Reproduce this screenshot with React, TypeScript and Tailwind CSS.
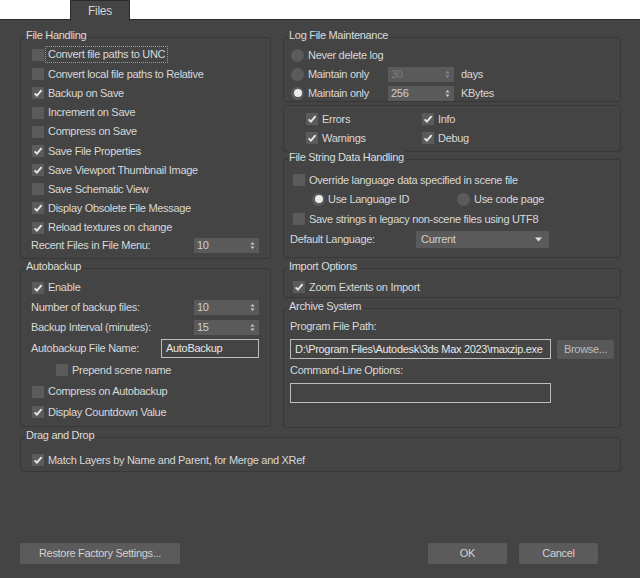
import React from 'react';

const Check: React.FC<{ on?: boolean }> = ({ on }) => (
  <span className="flex h-[12px] w-[12px] shrink-0 items-center justify-center bg-[#5b5b5b]">
    {on && (
      <svg width="12" height="12" viewBox="0 0 12 12">
        <path d="M2.6 6.4 L4.9 8.6 L9.6 3.2" stroke="#e4e4e4" strokeWidth="2" fill="none" />
      </svg>
    )}
  </span>
);

const Radio: React.FC<{ on?: boolean }> = ({ on }) => (
  <span className="flex h-[13px] w-[13px] shrink-0 items-center justify-center rounded-full bg-[#5b5b5b]">
    {on && <span className="h-[8px] w-[8px] rounded-full bg-[#ececec]" />}
  </span>
);

const CheckRow: React.FC<{ label: string; on?: boolean; className?: string; focus?: boolean }> = ({
  label,
  on,
  className = 'h-[19.2px]',
  focus,
}) => (
  <div className={`flex items-center ${className}`}>
    <Check on={on} />
    {focus ? (
      <span className="ml-[2px] px-[2px] leading-[15px] outline-1 outline-dotted outline-[#9a9a9a]">{label}</span>
    ) : (
      <span className="ml-[4px]">{label}</span>
    )}
  </div>
);

const Spinner: React.FC<{ value: string; w: string; disabled?: boolean }> = ({ value, w, disabled }) => (
  <div className={`flex h-[15px] items-center justify-between bg-[#5a5a5a] pl-[3px] pr-[4px] ${w}`}>
    <span className={disabled ? 'text-[#7c7c7c]' : 'text-[#cfcfcf]'}>{value}</span>
    <svg width="5" height="9" viewBox="0 0 5 9">
      <path d="M0.5 3.6 L2.5 1 L4.5 3.6Z M0.5 5.4 L2.5 8 L4.5 5.4Z" fill={disabled ? '#8a8a8a' : '#cdcdcd'} />
    </svg>
  </div>
);

const Group: React.FC<{ title?: string; className: string; children: React.ReactNode }> = ({
  title,
  className,
  children,
}) => (
  <div className={`relative shrink-0 rounded-[3px] border border-[#383838] ${className}`}>
    {title && (
      <span className="absolute -top-[9px] left-[4px] bg-[#444444] px-[1px] leading-[13px] text-[#dcdcdc]">
        {title}
      </span>
    )}
    {children}
  </div>
);

const Button: React.FC<{ label: string; w: string }> = ({ label, w }) => (
  <div className={`flex h-[21px] items-center justify-center rounded-[2px] bg-[#5b5b5b] text-[#d2d2d2] ${w}`}>
    {label}
  </div>
);

export default function App() {
  return (
    <div className="flex h-[578px] w-[640px] flex-col bg-white text-[11px] tracking-[-0.3px] text-[#d8d8d8] [font-family:Liberation_Sans,Arial,sans-serif]">
      <div className="flex h-[19px] shrink-0">
        <div className="relative z-10 ml-[70px] flex h-[20px] w-[60px] items-center justify-center border border-b-0 border-[#2a2a2a] bg-[#444444] text-[12px] text-[#d4d4d4]">
          Files
        </div>
      </div>

      <div className="flex flex-1 flex-col border-t border-[#2b2b2b] bg-[#444444] pl-[20px] pr-[19px] pt-[17px]">
        <div className="flex gap-[12px]">
          {/* left column */}
          <div className="flex w-[251px] flex-col gap-[9px]">
            <Group title="File Handling" className="h-[222px]">
              <div className="pl-[11px] pr-[11px] pt-[7.4px]">
                <CheckRow label="Convert file paths to UNC" focus />
                <CheckRow label="Convert local file paths to Relative" />
                <CheckRow label="Backup on Save" on />
                <CheckRow label="Increment on Save" />
                <CheckRow label="Compress on Save" />
                <CheckRow label="Save File Properties" on />
                <CheckRow label="Save Viewport Thumbnail Image" on />
                <CheckRow label="Save Schematic View" />
                <CheckRow label="Display Obsolete File Message" on />
                <CheckRow label="Reload textures on change" on />
                <div className="-ml-[1px] flex h-[16px] items-center justify-between">
                  <span>Recent Files in File Menu:</span>
                  <Spinner value="10" w="w-[65px]" />
                </div>
              </div>
            </Group>

            <Group title="Autobackup" className="h-[159px]">
              <div className="pl-[11px] pr-[11px] pt-[9px]">
                <CheckRow label="Enable" on className="h-[19px]" />
                <div className="-ml-[1px] flex h-[20px] items-center justify-between">
                  <span>Number of backup files:</span>
                  <Spinner value="10" w="w-[65px]" />
                </div>
                <div className="-ml-[1px] flex h-[20px] items-center justify-between">
                  <span>Backup Interval (minutes):</span>
                  <Spinner value="15" w="w-[65px]" />
                </div>
                <div className="-ml-[1px] flex h-[22px] items-center justify-between">
                  <span>Autobackup File Name:</span>
                  <div className="flex h-[19px] w-[98px] items-center border border-[#bdbdbd] pl-[4px] text-[#e6e6e6]">
                    AutoBackup
                  </div>
                </div>
                <CheckRow label="Prepend scene name" className="ml-[24px] h-[22px]" />
                <CheckRow label="Compress on Autobackup" className="h-[21px]" />
                <CheckRow label="Display Countdown Value" on className="h-[20px]" />
              </div>
            </Group>
          </div>

          {/* right column */}
          <div className="flex w-[338px] flex-col">
            <Group title="Log File Maintenance" className="h-[65px]">
              <div className="pl-[7px] pt-[7.5px]">
                <div className="flex h-[19px] items-center">
                  <Radio />
                  <span className="ml-[4px]">Never delete log</span>
                </div>
                <div className="flex h-[19px] items-center">
                  <Radio />
                  <span className="ml-[4px] w-[80px]">Maintain only</span>
                  <Spinner value="30" w="w-[66px]" disabled />
                  <span className="ml-[7px]">days</span>
                </div>
                <div className="flex h-[19px] items-center">
                  <Radio on />
                  <span className="ml-[4px] w-[80px]">Maintain only</span>
                  <Spinner value="256" w="w-[66px]" />
                  <span className="ml-[7px]">KBytes</span>
                </div>
              </div>
            </Group>

            <Group className="mt-[3px] h-[47px]">
              <div className="grid grid-cols-[116px_1fr] pl-[22px] pt-[3.5px]">
                <CheckRow label="Errors" on className="h-[19px]" />
                <CheckRow label="Info" on className="h-[19px]" />
                <CheckRow label="Warnings" on className="h-[19px]" />
                <CheckRow label="Debug" on className="h-[19px]" />
              </div>
            </Group>

            <Group title="File String Data Handling" className="mt-[7px] h-[99px]">
              <div className="pl-[9px] pt-[10.5px]">
                <CheckRow label="Override language data specified in scene file" className="h-[19px]" />
                <div className="ml-[19px] flex h-[19.5px] items-center">
                  <div className="flex w-[145px] items-center">
                    <Radio on />
                    <span className="ml-[3px]">Use Language ID</span>
                  </div>
                  <Radio />
                  <span className="ml-[4px]">Use code page</span>
                </div>
                <CheckRow label="Save strings in legacy non-scene files using UTF8" className="h-[20px]" />
                <div className="-ml-[3px] flex h-[20px] items-center">
                  <span className="w-[126px]">Default Language:</span>
                  <div className="flex h-[17px] w-[133px] items-center justify-between bg-[#5a5a5a] pl-[5px] pr-[7px] text-[#cfcfcf]">
                    <span>Current</span>
                    <svg width="7" height="5" viewBox="0 0 7 5">
                      <path d="M0 0.5 H7 L3.5 4.5Z" fill="#dedede" />
                    </svg>
                  </div>
                </div>
              </div>
            </Group>

            <Group title="Import Options" className="mt-[10px] h-[30px]">
              <div className="pl-[9px] pt-[8.5px]">
                <CheckRow label="Zoom Extents on Import" on className="h-[19px]" />
              </div>
            </Group>

            <Group title="Archive System" className="mt-[10px] h-[120px]">
              <div className="pl-[6px] pt-[10.5px]">
                <div className="leading-[13px]">Program File Path:</div>
                <div className="mt-[6.5px] flex items-center">
                  <div className="flex h-[20px] w-[261px] items-center border border-[#bdbdbd] pl-[4px] text-[#e6e6e6]">
                    D:\Program Files\Autodesk\3ds Max 2023\maxzip.exe
                  </div>
                  <div className="ml-[6px] flex h-[19px] w-[57px] items-center justify-center rounded-[2px] bg-[#585858] text-[#bdbdbd]">
                    Browse...
                  </div>
                </div>
                <div className="mt-[4.5px] leading-[13px]">Command-Line Options:</div>
                <div className="mt-[6.5px] h-[20px] w-[261px] border border-[#bdbdbd]" />
              </div>
            </Group>
          </div>
        </div>

        <Group title="Drag and Drop" className="mt-[9px] h-[35px] w-[601px]">
          <div className="pl-[11px] pt-[12.5px]">
            <CheckRow label="Match Layers by Name and Parent, for Merge and XRef" on className="h-[19px]" />
          </div>
        </Group>

        <div className="mt-[71px] flex items-center justify-between pr-[23px]">
          <Button label="Restore Factory Settings..." w="w-[160px]" />
          <div className="flex gap-[12px]">
            <Button label="OK" w="w-[79px]" />
            <Button label="Cancel" w="w-[79px]" />
          </div>
        </div>
      </div>
    </div>
  );
}
